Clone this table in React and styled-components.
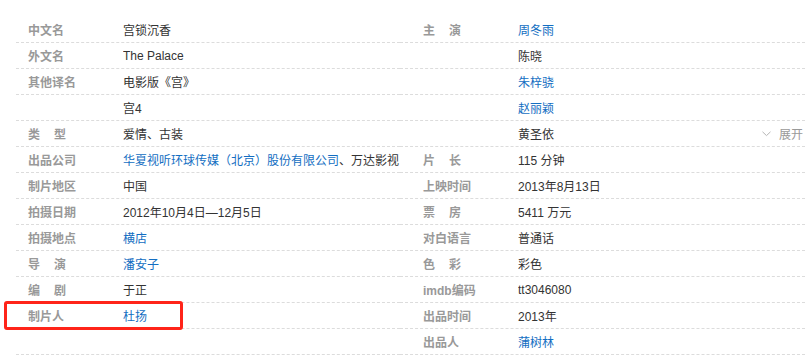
import styled, { createGlobalStyle } from 'styled-components';

const GlobalStyle = createGlobalStyle`
  body {
    margin: 0;
    background: #fff;
    font-family: 'Liberation Sans', Arial, 'Noto Sans CJK SC', sans-serif;
    font-size: 12px;
  }
`;

const left = [
  { label: '中文名', value: '宫锁沉香' },
  { label: '外文名', value: 'The Palace' },
  { label: '其他译名', value: '电影版《宫》' },
  { label: '', value: '宫4' },
  { label: ['类', '型'], value: '爱情、古装' },
  {
    label: '出品公司',
    value: [
      { text: '华夏视听环球传媒（北京）股份有限公司', link: true },
      { text: '、万达影视' },
    ],
  },
  { label: '制片地区', value: '中国' },
  { label: '拍摄日期', value: '2012年10月4日—12月5日' },
  { label: '拍摄地点', value: '横店', link: true },
  { label: ['导', '演'], value: '潘安子', link: true },
  { label: ['编', '剧'], value: '于正' },
  { label: '制片人', value: '杜扬', link: true, marked: true },
  { label: '', value: '' },
];

const right = [
  { label: ['主', '演'], value: '周冬雨', link: true },
  { label: '', value: '陈晓' },
  { label: '', value: '朱梓骁', link: true },
  { label: '', value: '赵丽颖', link: true },
  { label: '', value: '黄圣依', expand: true },
  { label: ['片', '长'], value: '115 分钟' },
  { label: '上映时间', value: '2013年8月13日' },
  { label: ['票', '房'], value: '5411 万元' },
  { label: '对白语言', value: '普通话' },
  { label: ['色', '彩'], value: '彩色' },
  { label: 'imdb编码', value: 'tt3046080' },
  { label: '出品时间', value: '2013年' },
  { label: '出品人', value: '蒲树林', link: true },
];

function App() {
  return (
    <>
      <GlobalStyle />
      <Page>
        <InfoColumn $width='384px' $pad='12px' $labelWidth='95px'>
          {left.map((item, i) => (
            <InfoRow key={i} item={item} />
          ))}
        </InfoColumn>
        <InfoColumn $width='405px' $pad='23px' $labelWidth='95px'>
          {right.map((item, i) => (
            <InfoRow key={i} item={item} />
          ))}
        </InfoColumn>
      </Page>
    </>
  );
}

function InfoRow({ item }) {
  return (
    <Row>
      <Label>
        {Array.isArray(item.label) ? (
          <>
            {item.label[0]}
            <Gap />
            {item.label[1]}
          </>
        ) : (
          item.label
        )}
      </Label>
      <Value>
        {Array.isArray(item.value)
          ? item.value.map((part, i) =>
              part.link ? (
                <Link key={i}>{part.text}</Link>
              ) : (
                <span key={i}>{part.text}</span>
              )
            )
          : item.link
          ? <Link>{item.value}</Link>
          : item.value}
      </Value>
      {item.expand && (
        <Expand>
          <svg width='9' height='6' viewBox='0 0 9 6'>
            <path d='M0.5 0.8 L4.5 4.6 L8.5 0.8' fill='none' stroke='#b5b5b5' strokeWidth='1' />
          </svg>
          展开
        </Expand>
      )}
      {item.marked && <Marker />}
    </Row>
  );
}

export default App;

const Page = styled.div`
  display: flex;
  padding: 17px 0 0 16px;
  width: 805px;
  box-sizing: border-box;
  overflow: hidden;
`;

const InfoColumn = styled.div`
  width: ${(p) => p.$width};
  flex-shrink: 0;

  & > div {
    padding-left: ${(p) => p.$pad};
  }

  & > div > :first-child {
    width: ${(p) => p.$labelWidth};
  }
`;

const Row = styled.div`
  position: relative;
  display: flex;
  align-items: center;
  height: 25px;
  border-bottom: 1px dashed #dcdcdc;
  white-space: nowrap;
`;

const Label = styled.div`
  flex-shrink: 0;
  color: #999;
  font-weight: 700;
  display: flex;
  align-items: center;
`;

const Gap = styled.span`
  display: inline-block;
  width: 14px;
`;

const Value = styled.div`
  color: #333;
  overflow: hidden;
  flex: 1;
`;

const Link = styled.span`
  color: #136ec2;
`;

const Expand = styled.div`
  display: flex;
  align-items: center;
  gap: 8px;
  color: #999;
  padding-right: 2px;
`;

const Marker = styled.div`
  position: absolute;
  left: -12px;
  top: -2px;
  width: 179px;
  height: 29px;
  box-sizing: border-box;
  border: 3px solid #ff2419;
  border-radius: 3px;
  pointer-events: none;
`;
